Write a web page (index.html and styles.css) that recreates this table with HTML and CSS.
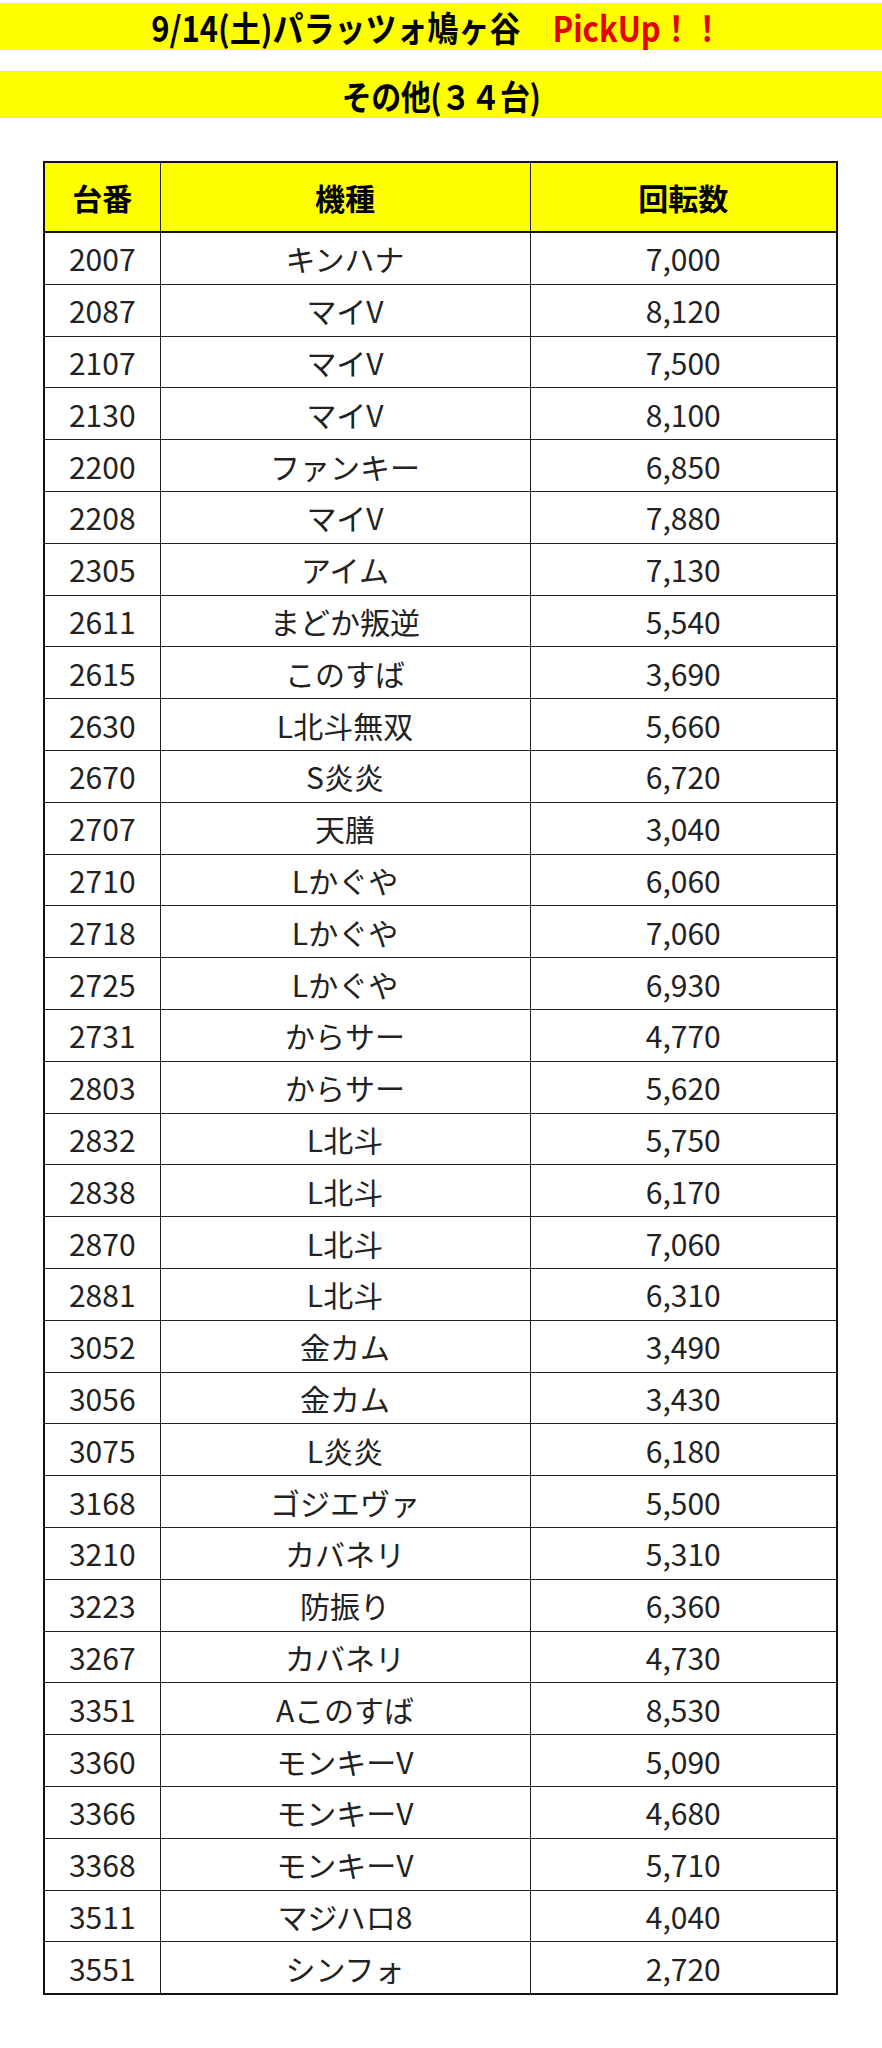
FILE: index.html
```html
<!DOCTYPE html>
<html lang="ja">
<head>
<meta charset="utf-8">
<title>9/14(土)パラッツォ鳩ヶ谷 PickUp！！</title>
<link rel="stylesheet" href="styles.css">
</head>
<body>
<div class="banner banner-top"><span class="banner-text">9/14(土)パラッツォ鳩ヶ谷<span class="pickup">PickUp！！</span></span></div>
<div class="banner banner-sub"><span class="banner-text">その他(３４台)</span></div>
<table class="machines">
<colgroup><col class="c-no"><col class="c-name"><col class="c-spin"></colgroup>
<thead><tr><th>台番</th><th>機種</th><th>回転数</th></tr></thead>
<tbody>
<tr><td>2007</td><td>キンハナ</td><td>7,000</td></tr>
<tr><td>2087</td><td>マイV</td><td>8,120</td></tr>
<tr><td>2107</td><td>マイV</td><td>7,500</td></tr>
<tr><td>2130</td><td>マイV</td><td>8,100</td></tr>
<tr><td>2200</td><td>ファンキー</td><td>6,850</td></tr>
<tr><td>2208</td><td>マイV</td><td>7,880</td></tr>
<tr><td>2305</td><td>アイム</td><td>7,130</td></tr>
<tr><td>2611</td><td>まどか叛逆</td><td>5,540</td></tr>
<tr><td>2615</td><td>このすば</td><td>3,690</td></tr>
<tr><td>2630</td><td>L北斗無双</td><td>5,660</td></tr>
<tr><td>2670</td><td>S炎炎</td><td>6,720</td></tr>
<tr><td>2707</td><td>天膳</td><td>3,040</td></tr>
<tr><td>2710</td><td>Lかぐや</td><td>6,060</td></tr>
<tr><td>2718</td><td>Lかぐや</td><td>7,060</td></tr>
<tr><td>2725</td><td>Lかぐや</td><td>6,930</td></tr>
<tr><td>2731</td><td>からサー</td><td>4,770</td></tr>
<tr><td>2803</td><td>からサー</td><td>5,620</td></tr>
<tr><td>2832</td><td>L北斗</td><td>5,750</td></tr>
<tr><td>2838</td><td>L北斗</td><td>6,170</td></tr>
<tr><td>2870</td><td>L北斗</td><td>7,060</td></tr>
<tr><td>2881</td><td>L北斗</td><td>6,310</td></tr>
<tr><td>3052</td><td>金カム</td><td>3,490</td></tr>
<tr><td>3056</td><td>金カム</td><td>3,430</td></tr>
<tr><td>3075</td><td>L炎炎</td><td>6,180</td></tr>
<tr><td>3168</td><td>ゴジエヴァ</td><td>5,500</td></tr>
<tr><td>3210</td><td>カバネリ</td><td>5,310</td></tr>
<tr><td>3223</td><td>防振り</td><td>6,360</td></tr>
<tr><td>3267</td><td>カバネリ</td><td>4,730</td></tr>
<tr><td>3351</td><td>Aこのすば</td><td>8,530</td></tr>
<tr><td>3360</td><td>モンキーV</td><td>5,090</td></tr>
<tr><td>3366</td><td>モンキーV</td><td>4,680</td></tr>
<tr><td>3368</td><td>モンキーV</td><td>5,710</td></tr>
<tr><td>3511</td><td>マジハロ8</td><td>4,040</td></tr>
<tr><td>3551</td><td>シンフォ</td><td>2,720</td></tr>
</tbody>
</table>
</body>
</html>
```
FILE: styles.css
```css
html, body {
  margin: 0;
  padding: 0;
  background: #ffffff;
}
body {
  font-family: "Noto Sans CJK JP", "Noto Sans", sans-serif;
  color: #222222;
  padding-top: 3px;
}
.banner {
  background: #ffff00;
  height: 47px;
  display: flex;
  align-items: center;
  justify-content: center;
}
.banner-sub {
  margin-top: 21px;
}
.banner-text {
  display: inline-block;
  font-weight: 700;
  font-size: 30px;
  line-height: 1;
  color: #000000;
  transform: scaleY(1.12);
}
.banner-top .banner-text {
  font-size: 31px;
  margin-left: -8px;
}
.banner-sub .banner-text {
  letter-spacing: -0.5px;
}
.pickup {
  color: #e60000;
  margin-left: 32px;
}
.machines {
  margin: 43px 0 0 43px;
  width: 793px;
  border-collapse: collapse;
  table-layout: fixed;
  border: 2px solid #111111;
}
.c-no { width: 116px; }
.c-name { width: 370px; }
.c-spin { width: 307px; }
.machines th,
.machines td {
  border: 1px solid #222222;
  text-align: center;
  padding: 0;
  white-space: nowrap;
}
.machines th {
  background: #ffff00;
  height: 68px;
  font-size: 30px;
  font-weight: 700;
  color: #000000;
  border-bottom: 2px solid #111111;
}
.machines td {
  height: 50.8px;
  font-size: 30px;
  font-weight: 400;
  color: #222222;
  line-height: 1;
}
```
